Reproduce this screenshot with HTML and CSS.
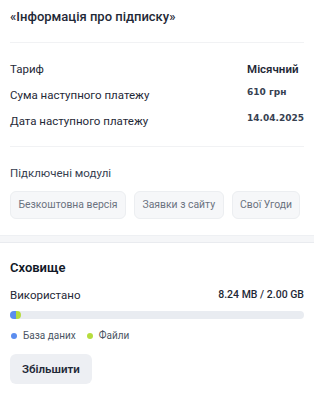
FILE: index.html
```html
<!DOCTYPE html>
<html lang="uk">
<head>
  <meta charset="UTF-8" />
  <title>Підписка</title>
  <link rel="stylesheet" href="styles.css">
</head>
<body>

  <!-- Інформація про підписку -->
  <div class="section">
    <h2 class="title">«Інформація про підписку»</h2>
    <div class="divider"></div>

    <div class="rows">
      <div class="label">Тариф</div>
      <div class="value plan">Місячний</div>
      <div class="label">Сума наступного платежу</div>
      <div class="value small">610 грн</div>
      <div class="label">Дата наступного платежу</div>
      <div class="value small">14.04.2025</div>
    </div>

    <div class="divider flat"></div>

    <div class="modules-title">Підключені модулі</div>
    <div class="chips">
      <span class="chip">Безкоштовна версія</span>
      <span class="chip">Заявки з сайту</span>
      <span class="chip">Свої Угоди</span>
    </div>
  </div>

  <div class="band"></div>

  <!-- Сховище -->
  <div class="section storage">
    <h3 class="storage-title">Сховище</h3>
    <div class="used">
      <span>Використано</span>
      <span class="used-value">8.24 MB / 2.00 GB</span>
    </div>
    <div class="bar">
      <span class="seg db" style="width:6px"></span>
      <span class="seg files" style="width:5px"></span>
    </div>
    <div class="legend">
      <span class="item"><i class="dot db"></i>База даних</span>
      <span class="item"><i class="dot files"></i>Файли</span>
    </div>
    <button class="btn">Збільшити</button>
  </div>

</body>
</html>
```

FILE: styles.css
```css
body {
  margin:0; padding:0;
  font-family: Roboto, 'Noto Sans', sans-serif;
  background:#fff;
  color:#1f2937;
}
.section { padding:0 10px; }
.title {
  margin:0;
  padding-top:8px;
  font-size:13px;
  font-weight:500;
  line-height:18px;
  color:#1f2937;
}
.divider {
  height:1px;
  background:#f1f2f4;
  margin-top:16px;
}
.divider.flat { margin-top:0; }
.rows {
  display:grid;
  grid-template-columns:1fr auto;
  row-gap:8px;
  padding:17px 0 16px;
}
.label {
  font-size:11.5px;
  line-height:18px;
  color:#1f2937;
}
.value { color:#1f2937; }
.value.plan {
  font-size:11.5px;
  font-weight:600;
  line-height:18px;
}
.value.small {
  font-family:'DejaVu Sans', sans-serif;
  font-size:9px;
  font-weight:bold;
  line-height:12px;
  color:#374151;
}
.modules-title {
  margin-top:17px;
  font-size:11.5px;
  line-height:18px;
  color:#374151;
}
.chips {
  display:flex;
  gap:8px;
  margin-top:9px;
}
.chip {
  padding:0 7.5px;
  height:26px;
  line-height:26px;
  white-space:nowrap;
  font-size:10.4px;
  color:#6b7280;
  background:#f6f7f9;
  border:1px solid #eceef1;
  border-radius:6px;
}
.band {
  height:6px;
  margin-top:16px;
  background:#f5f6f8;
  border-top:1px solid #eef0f3;
  border-bottom:1px solid #e9ebef;
}
.storage-title {
  margin:0;
  padding-top:16px;
  font-size:13px;
  font-weight:600;
  line-height:18px;
  color:#111827;
}
.used {
  display:flex;
  justify-content:space-between;
  align-items:center;
  margin-top:9px;
  font-size:11.5px;
  line-height:18px;
}
.used-value {
  font-size:10.5px;
  font-weight:500;
}
.bar {
  display:flex;
  height:8px;
  margin-top:7px;
  background:#e9ecf1;
  border-radius:4px;
  overflow:hidden;
}
.seg.db { background:#5b8def; }
.seg.files { background:#b6dc3e; border-radius:0 4px 4px 0; }
.legend {
  display:flex;
  gap:10px;
  margin-top:10px;
  font-size:10px;
  line-height:14px;
  color:#4b5563;
}
.item { display:flex; align-items:center; gap:6px; }
.dot {
  width:6px; height:6px;
  border-radius:50%;
  margin-left:1px;
}
.dot.db { background:#5b8def; }
.dot.files { background:#b6dc3e; }
.btn {
  margin-top:11px;
  padding:0 12px;
  height:30px;
  font-family:inherit;
  font-size:11.5px;
  font-weight:600;
  color:#1f2937;
  background:#edeff3;
  border:none;
  border-radius:6px;
}
```
